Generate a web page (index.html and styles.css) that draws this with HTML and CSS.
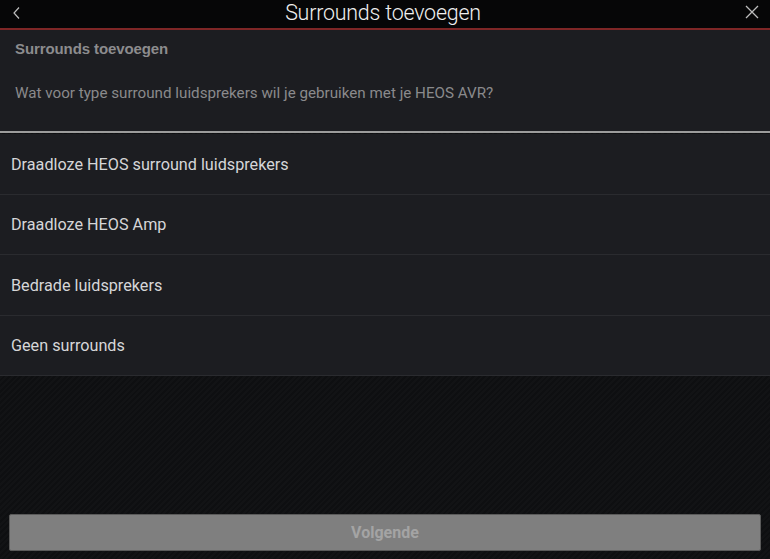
FILE: index.html
```html
<!DOCTYPE html>
<html>
<head>
<meta charset="utf-8">
<link rel="stylesheet" href="styles.css">
</head>
<body>
<div class="app">
  <header class="topbar">
    <svg class="back" width="10" height="14" viewBox="0 0 10 14"><path d="M7 1.5 L2 7 L7 12.5" fill="none" stroke="#bdbdbd" stroke-width="1.2"/></svg>
    <h1 class="title">Surrounds toevoegen</h1>
    <svg class="close" width="16" height="16" viewBox="0 0 16 16"><path d="M2 2 L14 14 M14 2 L2 14" fill="none" stroke="#bdbdbd" stroke-width="1.3"/></svg>
  </header>
  <section class="intro">
    <h2 class="intro-title">Surrounds toevoegen</h2>
    <p class="intro-text">Wat voor type surround luidsprekers wil je gebruiken met je HEOS AVR?</p>
  </section>
  <ul class="options">
    <li class="option">Draadloze HEOS surround luidsprekers</li>
    <li class="option">Draadloze HEOS Amp</li>
    <li class="option">Bedrade luidsprekers</li>
    <li class="option">Geen surrounds</li>
  </ul>
  <div class="spacer"></div>
  <div class="footer">
    <button class="next">Volgende</button>
  </div>
</div>
</body>
</html>
```

FILE: styles.css
```css
* { box-sizing: border-box; }
html, body { margin: 0; padding: 0; }
body {
  width: 770px;
  height: 559px;
  overflow: hidden;
  background: #0f1012;
  font-family: Roboto, "Liberation Sans", sans-serif;
}
.app {
  display: flex;
  flex-direction: column;
  height: 559px;
  background: repeating-linear-gradient(135deg, #0e0f11 0 2px, #121315 2px 4px);
}
.topbar {
  height: 30px;
  background: #060607;
  border-bottom: 2px solid #7e2626;
  display: flex;
  align-items: center;
  justify-content: space-between;
  padding: 0 10px 0 12px;
}
.back { margin-top: -3px; }
.close { margin-top: -4px; }
.title {
  margin: -4px 0 0 0;
  font-weight: 300;
  font-size: 21.4px;
  color: #f0f0f0;
  letter-spacing: -0.2px;
}
.intro {
  background: #1c1d21;
  padding: 10px 15px 0 15px;
  height: 103px;
  border-bottom: 2px solid #9c9c9c;
}
.intro-title {
  margin: 0;
  font-family: "Liberation Sans", Arial, sans-serif;
  font-size: 15px;
  font-weight: 700;
  color: #8c8c8e;
  line-height: 18px;
}
.intro-title { letter-spacing: -0.1px; }
.intro-text {
  margin: 26px 0 0 0;
  font-size: 15.2px;
  color: #8a8a8c;
  line-height: 18px;
}
.options {
  list-style: none;
  margin: 0;
  padding: 0;
  background: #1c1d21;
  margin-top: 1px;
}
.option {
  height: 60px;
  display: flex;
  align-items: center;
  padding-left: 11px;
  font-size: 16.2px;
  color: #d6d6d8;
  border-bottom: 1px solid #2a2b2f;
}
.option:nth-child(odd) { height: 61px; }
.spacer { flex: 1; }
.footer {
  padding: 0 9px 8px 9px;
}
.next {
  width: 100%;
  height: 37px;
  background: #7f7f7f;
  border: 1px solid #5a5a5a;
  border-radius: 2px;
  font-family: Roboto, "Liberation Sans", sans-serif;
  font-weight: 700;
  font-size: 16px;
  color: #a4a4a4;
  padding: 0;
}
```
